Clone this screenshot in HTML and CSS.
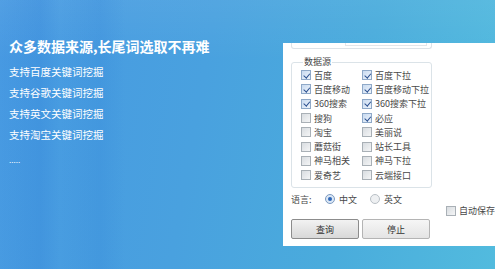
FILE: index.html
```html
<!DOCTYPE html>
<html lang="zh-CN">
<head>
  <meta charset="UTF-8" />
  <title>长尾词挖掘</title>
  <link rel="stylesheet" href="styles.css">
</head>
<body>
  <div class="intro">
    <h1>众多数据来源,长尾词选取不再难</h1>
    <p>支持百度关键词挖掘</p>
    <p>支持谷歌关键词挖掘</p>
    <p>支持英文关键词挖掘</p>
    <p>支持淘宝关键词挖掘</p>
    <p class="more">.....</p>
  </div>

  <div class="panel">
    <div class="main-col">
      <div class="top-group"><div class="top-field"></div></div>

      <fieldset class="sources">
        <legend>数据源</legend>
        <div class="grid">
          <label class="item"><span class="box on"></span>百度</label>
          <label class="item"><span class="box on"></span>百度下拉</label>
          <label class="item"><span class="box on"></span>百度移动</label>
          <label class="item"><span class="box on"></span>百度移动下拉</label>
          <label class="item"><span class="box on"></span>360搜索</label>
          <label class="item"><span class="box on"></span>360搜索下拉</label>
          <label class="item"><span class="box"></span>搜狗</label>
          <label class="item"><span class="box on"></span>必应</label>
          <label class="item"><span class="box"></span>淘宝</label>
          <label class="item"><span class="box"></span>美丽说</label>
          <label class="item"><span class="box"></span>蘑菇街</label>
          <label class="item"><span class="box"></span>站长工具</label>
          <label class="item"><span class="box"></span>神马相关</label>
          <label class="item"><span class="box"></span>神马下拉</label>
          <label class="item"><span class="box"></span>爱奇艺</label>
          <label class="item"><span class="box"></span>云端接口</label>
        </div>
      </fieldset>

      <div class="lang">
        <span class="lang-label">语言:</span>
        <label class="radio"><span class="dot on"></span>中文</label>
        <label class="radio"><span class="dot"></span>英文</label>
      </div>

      <div class="buttons">
        <button class="btn primary">查询</button>
        <button class="btn">停止</button>
      </div>
    </div>

    <div class="side-col">
      <label class="item"><span class="box"></span>自动保存结果</label>
    </div>
  </div>
</body>
</html>
```

FILE: styles.css
```css
body {
  margin: 0;
  width: 495px;
  height: 269px;
  overflow: hidden;
  display: flex;
  align-items: flex-start;
  font-family: "Noto Sans CJK SC", "Liberation Sans", sans-serif;
  background:
    linear-gradient(90deg, rgba(40,120,210,0) 0px, rgba(40,120,210,.2) 40px, rgba(40,120,210,0) 60px, rgba(40,120,210,.16) 100px, rgba(40,120,210,0) 125px),
    linear-gradient(180deg, rgba(255,255,255,.06) 0px, rgba(255,255,255,0) 60px),
    linear-gradient(100deg, #4799e2 0%, #49a1df 40%, #4aacdc 70%, #52bbde 100%);
}

.intro {
  width: 274px;
  padding: 38px 0 0 9px;
  box-sizing: border-box;
  color: #fff;
}

.intro h1 {
  margin: 0 0 11px;
  font-size: 14px;
  line-height: 16px;
  font-weight: bold;
  white-space: nowrap;
}

.intro p {
  margin: 0 0 8px;
  font-size: 10.5px;
  line-height: 13px;
  white-space: nowrap;
}

.intro .more {
  font-size: 8px;
  margin-top: 12px;
}

.panel {
  margin: 43px 0 0 9px;
  width: 212px;
  height: 203px;
  background: #fff;
  display: flex;
  padding-left: 8px;
  box-sizing: border-box;
  color: #484848;
  font-size: 9px;
  overflow: hidden;
}

.main-col {
  width: 141px;
  flex: none;
}

.top-group {
  height: 5px;
  border: 1px solid #dde3e8;
  border-top: none;
  border-radius: 0 0 3px 3px;
  padding-left: 53px;
  padding-right: 4px;
}

.top-field {
  height: 2px;
  border: 1px solid #e3e6ea;
  border-top: none;
}

.sources {
  margin: 8px 0 0;
  padding: 1px 0 2px 9px;
  border: 1px solid #dbe3e8;
  border-radius: 3px;
  height: 131px;
  box-sizing: border-box;
}

.sources legend {
  padding: 0 1px;
  margin-left: 2px;
  line-height: 10px;
  color: #444;
}

.grid {
  display: grid;
  grid-template-columns: 61px 1fr;
  grid-auto-rows: 14.3px;
}

.item {
  display: flex;
  align-items: center;
  gap: 3px;
  white-space: nowrap;
}

.box {
  width: 8px;
  height: 8px;
  border: 1px solid #a9b0b6;
  background: linear-gradient(135deg, #d8dce0, #f4f5f6);
  flex: none;
  position: relative;
}

.box.on {
  border-color: #8fa9c8;
  background: linear-gradient(135deg, #c8daf0, #eef4fb);
}

.box.on::after {
  content: "";
  position: absolute;
  left: 2.5px;
  top: 0.5px;
  width: 2.5px;
  height: 4.5px;
  border: solid #2a4f8f;
  border-width: 0 1.3px 1.3px 0;
  transform: rotate(40deg);
}

.lang {
  display: flex;
  align-items: center;
  height: 14px;
  margin-top: 4px;
}

.lang-label {
  width: 34px;
}

.radio {
  display: flex;
  align-items: center;
  gap: 4px;
  width: 45px;
}

.dot {
  width: 8px;
  height: 8px;
  border-radius: 50%;
  border: 1px solid #b9c0c6;
  background: #eef0f2;
  position: relative;
}

.dot.on {
  border-color: #7c9ac0;
  background: #dbe7f5;
}

.dot.on::after {
  content: "";
  position: absolute;
  left: 2px;
  top: 2px;
  width: 4px;
  height: 4px;
  border-radius: 50%;
  background: #2d66b8;
}

.buttons {
  display: flex;
  gap: 3px;
  margin-top: 13px;
}

.btn {
  width: 68px;
  height: 20px;
  font-family: inherit;
  font-size: 9px;
  color: #333;
  border: 1px solid #b4b4b4;
  border-radius: 2px;
  background: linear-gradient(#f6f6f6, #e4e4e4);
  padding: 0;
}

.btn.primary {
  border-color: #8c8c8c;
  background: linear-gradient(#f2f2f2, #d8d8d8);
}

.side-col {
  padding: 161px 0 0 14px;
}
```
